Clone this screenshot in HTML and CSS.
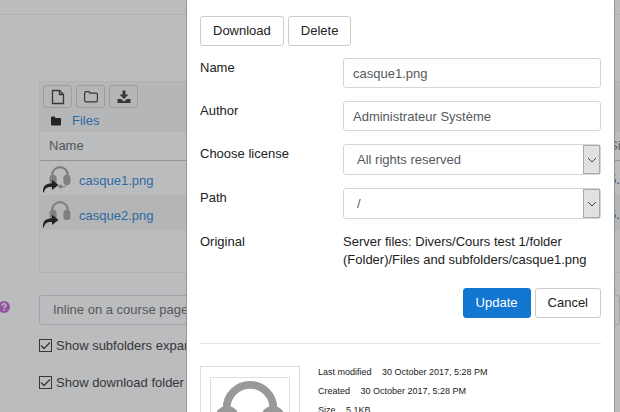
FILE: index.html
```html
<!DOCTYPE html>
<html lang="en">
<head>
  <meta charset="utf-8">
  <title>Files</title>
  <link rel="stylesheet" href="styles.css">
</head>
<body>

<svg class="symbols" aria-hidden="true">
  <symbol id="headphones" viewBox="0 0 24 24">
    <path d="M4.200 11.500V10a7.800 7.800 0 0 1 15.600 0v1.500" fill="none" stroke="currentColor" stroke-width="2.200"/>
    <rect x="1.600" y="10" width="7" height="10" rx="3" fill="currentColor"/>
    <rect x="15.400" y="10" width="7" height="10" rx="3" fill="currentColor"/>
  </symbol>
  <symbol id="alias" viewBox="0 0 16 14">
    <path d="M0 13.500C-.5 6.500 3 4.500 9 4.500V.8L15.500 6 9 11V8C4 7.800 1.500 9.500 1 13.500z" fill="#000"/>
  </symbol>
</svg>

<main class="page">
  <div class="page-header"></div>
  <div class="filemanager">
    <div class="toolbar">
      <button type="button" class="tool" aria-label="Add">
        <svg width="14" height="16" viewBox="0 0 14 16"><path d="M1.500 1.500h7l4 4v9h-11zM8.500 1.500v4h4" fill="none" stroke="currentColor" stroke-width="1.300"/></svg>
      </button>
      <button type="button" class="tool" aria-label="Create folder">
        <svg width="16" height="16" viewBox="0 0 16 16"><path d="M1.600 4q0-1.400 1.400-1.400h2.600q1.200 0 1.200 1.600H13q1.400 0 1.400 1.400v5.800q0 1.400-1.400 1.400H3q-1.400 0-1.400-1.400z" fill="none" stroke="currentColor" stroke-width="1.200"/></svg>
      </button>
      <button type="button" class="tool" aria-label="Download all">
        <svg width="16" height="16" viewBox="0 0 16 16"><path d="M6.500 1.500h3v4h3L8 10 3.500 5.500h3zM1.500 10h3.500l3 2.500 3-2.500h3.500v4h-13z" fill="currentColor"/></svg>
      </button>
    </div>
    <div class="breadcrumb">
      <svg width="10" height="10" viewBox="0 0 10 10"><path d="M0 1.500Q0 .5 1 .5h2.500l1 1.500H9q1 0 1 1v5.500q0 1-1 1H1q-1 0-1-1z"/></svg>
      <a href="#">Files</a>
    </div>
    <table class="files">
      <thead>
        <tr><th class="col-name">Name</th><th>Size</th></tr>
      </thead>
      <tbody>
        <tr>
          <td><div class="file">
            <span class="file-icon"><svg class="pic" viewBox="0 0 24 24"><use href="#headphones"/><path d="M20 19q-2 3-7 3" fill="none" stroke="currentColor"/><circle cx="12.500" cy="21.500" r="2" fill="currentColor"/></svg><svg class="alias"><use href="#alias"/></svg></span>
            <a href="#">casque1.png</a></div></td>
          <td class="col-size">5.1KB</td>
        </tr>
        <tr>
          <td><div class="file">
            <span class="file-icon"><svg class="pic"><use href="#headphones"/></svg><svg class="alias"><use href="#alias"/></svg></span>
            <a href="#">casque2.png</a></div></td>
          <td class="col-size">5.2KB</td>
        </tr>
      </tbody>
    </table>
  </div>

  <div class="display">
    <svg class="help" width="12" height="12" viewBox="0 0 12 12"><circle cx="6" cy="6" r="6" fill="#c050c8"/><path d="M4 4.600q.2-1.800 2-1.800t2 1.600q0 .9-1 1.400-.9.400-.9 1.200M6.100 8v1.600" fill="none" stroke="#fff" stroke-width="1.600"/></svg>
    <select class="control" aria-label="Display folder contents"><option>Inline on a course page</option></select>
  </div>
  <label class="check"><input type="checkbox" checked> Show subfolders expanded</label>
  <label class="check"><input type="checkbox" checked> Show download folder button</label>
</main>

<div class="backdrop"></div>

<section class="dialog" role="dialog" aria-label="Edit file">
  <form>
    <div class="actions">
      <button type="button" class="btn">Download</button>
      <button type="button" class="btn">Delete</button>
    </div>
    <div class="row">
      <label for="name">Name</label>
      <input class="control" type="text" id="name" value="casque1.png">
    </div>
    <div class="row">
      <label for="author">Author</label>
      <input class="control" type="text" id="author" value="Administrateur Système">
    </div>
    <div class="row">
      <label for="license">Choose license</label>
      <div class="select">
        <select class="control" id="license"><option>All rights reserved</option></select>
        <span class="arrow"><svg width="10" height="6" viewBox="0 0 10 6"><path d="M1 1l4 4 4-4"/></svg></span>
      </div>
    </div>
    <div class="row">
      <label for="path">Path</label>
      <div class="select">
        <select class="control" id="path"><option>/</option></select>
        <span class="arrow"><svg width="10" height="6" viewBox="0 0 10 6"><path d="M1 1l4 4 4-4"/></svg></span>
      </div>
    </div>
    <div class="row">
      <span>Original</span>
      <span>Server files: Divers/Cours test 1/folder (Folder)/Files and subfolders/casque1.png</span>
    </div>
    <div class="actions submit">
      <button type="button" class="btn primary">Update</button>
      <button type="button" class="btn">Cancel</button>
    </div>
  </form>
  <div class="info">
    <div class="thumb">
      <div class="thumb-inner">
        <svg viewBox="0 0 80 80">
          <path d="M16 35v-4a24 24 0 0 1 48 0v4" fill="none" stroke="currentColor" stroke-width="8"/>
          <rect x="5" y="29" width="23" height="36" rx="10" fill="currentColor"/>
          <rect x="52" y="29" width="23" height="36" rx="10" fill="currentColor"/>
        </svg>
      </div>
    </div>
    <div class="meta">
      <p>Last modified <span>30 October 2017, 5:28 PM</span></p>
      <p>Created <span>30 October 2017, 5:28 PM</span></p>
      <p>Size <span>5.1KB</span></p>
    </div>
  </div>
</section>

</body>
</html>
```

FILE: styles.css
```css
* {box-sizing: border-box}

body {
  margin: 0;
  height: 100vh;
  overflow: hidden;
  position: relative;
  font: 13px/18px "Liberation Sans", Arial, sans-serif;
  color: #222;
  background: #fff;
}

button, input, select {
  font: inherit;
  color: inherit;
}

a {
  color: #1177d1;
  text-decoration: none;
}

svg {
  display: block;
}

.symbols {
  position: absolute;
  width: 0;
  height: 0;
}

/* page behind the dialog */
.page {
  height: 100%;
  overflow: hidden;
}

.page-header {
  height: 15px;
  margin-bottom: 66px;
  border-bottom: 1px solid #eee;
}

.filemanager {
  height: 192px;
  margin: 0 -60px 0 39px;
  border: 1px solid #eee;
}

.toolbar {
  display: flex;
  gap: 4px;
  padding: 3px;
  background: #f5f5f5;
}

.tool {
  display: flex;
  align-items: center;
  justify-content: center;
  width: 29px;
  height: 23px;
  padding: 0;
  border: 1px solid #ccc;
  border-radius: 3px;
  background: none;
}

.breadcrumb {
  display: flex;
  align-items: center;
  gap: 11px;
  height: 21px;
  padding-left: 11px;
  border-bottom: 1px solid #eee;
  background: #f5f5f5;
}

.files {
  width: 100%;
  border-collapse: collapse;
  table-layout: fixed;
}

.files th {
  height: 28px;
  padding: 0 9px;
  border-bottom: 1px solid #bbb;
  font-weight: normal;
  text-align: left;
  color: #555;
}

.files .col-name {
  width: 560px;
}

.files td {
  height: 35px;
  padding: 0 3px;
}

.files .col-size {
  padding: 4px 9px 0;
}

.files tbody tr:nth-child(even) {
  background: #f3f3f3;
}

.file {
  display: flex;
  align-items: center;
  gap: 7px;
}

.file a {
  padding-top: 6px;
}

.file-icon {
  position: relative;
  width: 29px;
  height: 30px;
  color: #999;
}

.pic {
  width: 24px;
  height: 24px;
  margin: 2px 0 0 5px;
}

.alias {
  position: absolute;
  left: 0;
  bottom: 0;
  width: 16px;
  height: 14px;
}

.display {
  display: flex;
  align-items: flex-start;
  gap: 29px;
  margin: 22px 0 2px -2px;
}

.help {
  flex: none;
  margin-top: 6px;
}

.check {
  display: flex;
  align-items: center;
  gap: 4px;
  height: 37px;
  padding-left: 39px;
}

.check input {
  appearance: none;
  width: 13px;
  height: 13px;
  margin: 0;
  border: 1px solid #222;
  background: #fff url("data:image/svg+xml,%3Csvg xmlns='http://www.w3.org/2000/svg' viewBox='0 0 11 11'%3E%3Cpath d='M1 5.500l3 3 6-6' fill='none' stroke='%23222' stroke-width='1.300'/%3E%3C/svg%3E");
}

.backdrop {
  position: absolute;
  inset: 0;
  background: rgba(85, 88, 92, .4);
}

/* dialog */
.dialog {
  position: absolute;
  top: 0;
  bottom: 0;
  left: 186px;
  right: 5px;
  padding: 16px 13px 0;
  overflow: hidden;
  border: 1px solid #939496;
  border-width: 0 1px;
  background: #fff;
}

.actions {
  display: flex;
  gap: 4px;
  margin-bottom: 12px;
}

.btn {
  height: 30px;
  padding: 0 12px;
  border: 1px solid #ccc;
  border-radius: 3px;
  background: #fff;
}

.btn.primary {
  border-color: #1177d1;
  background: #1177d1;
  color: #fff;
}

.row {
  display: grid;
  grid-template-columns: 143px 1fr;
  margin-bottom: 13px;
}

.row > label,
.row > span {
  padding-top: 1px;
}

.control {
  width: 100%;
  height: 30px;
  padding: 0 9px;
  border: 1px solid #d4d6d8;
  border-radius: 3px;
  background: #fff;
  color: #55595c;
  appearance: none;
}

.select {
  position: relative;
}

.select .control,
.display .control {
  height: 31px;
  padding: 0 13px;
}

.display .control {
  height: 30px;
}

.arrow {
  position: absolute;
  top: 1px;
  right: 1px;
  display: flex;
  align-items: center;
  justify-content: center;
  width: 17px;
  height: 29px;
  border: 1px solid #aaa;
  background: #e1e1e1;
  pointer-events: none;
}

.arrow path {
  fill: none;
  stroke: #444;
}

.submit {
  justify-content: flex-end;
  margin: 19px 0 25px;
}

.info {
  display: flex;
  gap: 18px;
  padding-top: 22px;
  border-top: 1px solid #e1e3e4;
}

.thumb {
  width: 100px;
  height: 110px;
  padding: 10px 9px;
  border: 1px solid #ddd;
}

.thumb-inner {
  border: 1px solid #ddd;
  color: #999;
}

.thumb-inner svg {
  width: 100%;
}

.meta {
  font-size: 9px;
  line-height: 13px;
}

.meta p {
  margin: 0 0 6px;
}

.meta span {
  margin-left: 8px;
}
```
